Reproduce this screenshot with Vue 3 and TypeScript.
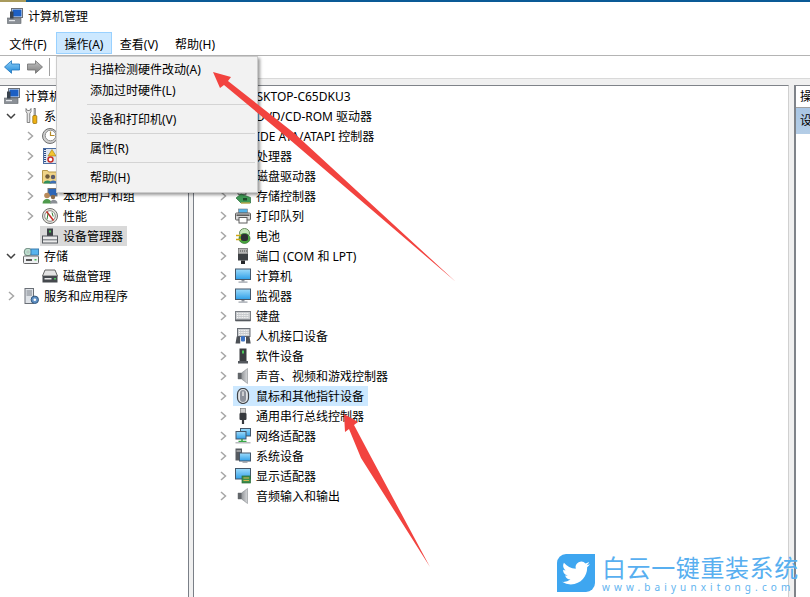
<script setup lang="ts">
interface TreeRow {
  label: string
  icon: string
  chevron?: 'right' | 'down'
  depth: number
  selected?: boolean
}

const menus = ['文件(F)', '操作(A)', '查看(V)', '帮助(H)']

// null is a separator line
const actionItems: (string | null)[] = [
  '扫描检测硬件改动(A)',
  '添加过时硬件(L)',
  null,
  '设备和打印机(V)',
  null,
  '属性(R)',
  null,
  '帮助(H)',
]

const leftTree: TreeRow[] = [
  { label: '计算机管理(本地)', icon: 'pc', depth: 0 },
  { label: '系统工具', icon: 'tools', chevron: 'down', depth: 1 },
  { label: '任务计划程序', icon: 'clock', chevron: 'right', depth: 2 },
  { label: '事件查看器', icon: 'log', chevron: 'right', depth: 2 },
  { label: '共享文件夹', icon: 'share', chevron: 'right', depth: 2 },
  { label: '本地用户和组', icon: 'users', chevron: 'right', depth: 2 },
  { label: '性能', icon: 'perf', chevron: 'right', depth: 2 },
  { label: '设备管理器', icon: 'devmgr', depth: 2, selected: true },
  { label: '存储', icon: 'storage', chevron: 'down', depth: 1 },
  { label: '磁盘管理', icon: 'disk', depth: 2 },
  { label: '服务和应用程序', icon: 'services', chevron: 'right', depth: 1 },
]

const deviceTree: TreeRow[] = [
  { label: 'DESKTOP-C65DKU3', icon: 'pc', depth: 0 },
  { label: 'DVD/CD-ROM 驱动器', icon: 'disk', chevron: 'right', depth: 1 },
  { label: 'IDE ATA/ATAPI 控制器', icon: 'storctl', chevron: 'right', depth: 1 },
  { label: '处理器', icon: 'storctl', chevron: 'right', depth: 1 },
  { label: '磁盘驱动器', icon: 'disk', chevron: 'right', depth: 1 },
  { label: '存储控制器', icon: 'storctl', chevron: 'right', depth: 1 },
  { label: '打印队列', icon: 'printer', chevron: 'right', depth: 1 },
  { label: '电池', icon: 'battery', chevron: 'right', depth: 1 },
  { label: '端口 (COM 和 LPT)', icon: 'port', chevron: 'right', depth: 1 },
  { label: '计算机', icon: 'monitor', chevron: 'right', depth: 1 },
  { label: '监视器', icon: 'monitor', chevron: 'right', depth: 1 },
  { label: '键盘', icon: 'keyboard', chevron: 'right', depth: 1 },
  { label: '人机接口设备', icon: 'hid', chevron: 'right', depth: 1 },
  { label: '软件设备', icon: 'software', chevron: 'right', depth: 1 },
  { label: '声音、视频和游戏控制器', icon: 'sound', chevron: 'right', depth: 1 },
  { label: '鼠标和其他指针设备', icon: 'mouse', chevron: 'right', depth: 1, selected: true },
  { label: '通用串行总线控制器', icon: 'usb', chevron: 'right', depth: 1 },
  { label: '网络适配器', icon: 'network', chevron: 'right', depth: 1 },
  { label: '系统设备', icon: 'system', chevron: 'right', depth: 1 },
  { label: '显示适配器', icon: 'display', chevron: 'right', depth: 1 },
  { label: '音频输入和输出', icon: 'sound', chevron: 'right', depth: 1 },
]
</script>

<template>
  <div class="window">
    <svg class="defs" width="0" height="0">
      <defs>
        <linearGradient id="screen" x1="0" y1="0" x2="0" y2="1">
          <stop offset="0" stop-color="#9fdcfb" />
          <stop offset="1" stop-color="#2f9fe8" />
        </linearGradient>
        <linearGradient id="backfill" x1="0" y1="0" x2="0" y2="1">
          <stop offset="0" stop-color="#8fd0f8" />
          <stop offset="1" stop-color="#1e88d8" />
        </linearGradient>
        <linearGradient id="fwdfill" x1="0" y1="0" x2="0" y2="1">
          <stop offset="0" stop-color="#c4c4c4" />
          <stop offset="1" stop-color="#7d7d7d" />
        </linearGradient>
        <linearGradient id="speaker" x1="0" y1="0" x2="1" y2="0">
          <stop offset="0" stop-color="#6e7276" />
          <stop offset="1" stop-color="#d6d8da" />
        </linearGradient>
      </defs>
      <symbol id="i-pc" viewBox="0 0 16 16">
        <rect x="0.500" y="10" width="13.500" height="5.500" fill="#8a8f96" stroke="#5f646a" stroke-width=".6" />
        <rect x="2" y="12" width="6" height="1.200" fill="#e4e7ea" />
        <rect x="4.500" y="0.500" width="11" height="9" fill="#e8ecef" stroke="#6b7078" />
        <rect x="5.500" y="1.500" width="9" height="7" fill="#1c5fc4" />
        <rect x="3" y="3.500" width="3.500" height="7" fill="#39434f" />
      </symbol>
      <symbol id="i-tools" viewBox="0 0 16 16">
        <path d="M3 .500v3l1.200 2v9h2.600v-9l1.200-2v-3L6.500 2.500h-2z" fill="#e6e6e6" stroke="#666" stroke-width=".8" />
        <rect x="11" y="0.500" width="1.600" height="7" fill="#b8b8b8" stroke="#666" stroke-width=".5" />
        <rect x="9.800" y="7.500" width="4" height="8" rx="1" fill="#eeb012" stroke="#8d6500" stroke-width=".7" />
      </symbol>
      <symbol id="i-clock" viewBox="0 0 16 16">
        <circle cx="8" cy="8" r="7.500" fill="#cfcfcf" stroke="#707070" />
        <circle cx="8.500" cy="7.500" r="5.300" fill="#fff" stroke="#8c8c8c" />
        <path d="M8.500 3.500v4H12.500" fill="none" stroke="#b58a2a" stroke-width="1.200" />
      </symbol>
      <symbol id="i-log" viewBox="0 0 16 16">
        <rect x="1.500" y="0.500" width="13" height="15" fill="#dfe7f2" stroke="#4d6ea3" />
        <path d="M3 1v14" stroke="#2f4f86" stroke-width="2" stroke-dasharray="1 1" />
        <path d="M10 1.500l4 6.500H6z" fill="#f4c430" stroke="#9a7a10" stroke-width=".6" />
        <circle cx="8.500" cy="11.500" r="2.500" fill="#fff" stroke="#c8302a" stroke-width="1.500" />
      </symbol>
      <symbol id="i-share" viewBox="0 0 16 16">
        <path d="M.500 2.500h5l1 1.500h9v11H.500z" fill="#f0d488" stroke="#b6984a" />
        <circle cx="5.500" cy="8.500" r="2.200" fill="#6d5a3a" />
        <path d="M1.500 15.500c0-4 8-4 8 0z" fill="#2e8f5d" />
        <circle cx="11" cy="9" r="2.200" fill="#5a5a6a" />
        <path d="M7.500 15.500c0-4 7.500-4 7.500 0z" fill="#3d6fb4" />
      </symbol>
      <symbol id="i-users" viewBox="0 0 16 16">
        <rect x="6" y="0.500" width="9" height="7.500" fill="#2c66b8" stroke="#777" />
        <circle cx="5" cy="7.500" r="2.800" fill="#b98a5a" />
        <path d="M.500 15.500c0-6 9-6 9 0z" fill="#4f9a4c" />
        <circle cx="11" cy="9" r="2.200" fill="#8a6a48" />
        <path d="M8 15.500c0-5 7.500-5 7.500 0z" fill="#8b8f96" />
      </symbol>
      <symbol id="i-perf" viewBox="0 0 16 16">
        <circle cx="8" cy="8" r="7.500" fill="#e8e6dc" stroke="#707070" />
        <circle cx="8" cy="8" r="5.300" fill="#fff" stroke="#8c8c8c" />
        <path d="M4.500 3.500l7 9" stroke="#c8302a" stroke-width="1.600" />
        <path d="M5 11.500l1-6M10 4.500l1.200 4" stroke="#2f7d32" />
      </symbol>
      <symbol id="i-devmgr" viewBox="0 0 16 16">
        <rect x="5" y="0.500" width="6" height="8" fill="#3d4146" />
        <rect x="7" y="2.500" width="2" height="2" fill="#4cc45a" />
        <rect x="0.500" y="8" width="15" height="7" fill="#eaeaea" stroke="#55595e" />
        <rect x="1" y="11" width="14" height="1.500" fill="#8f9398" />
      </symbol>
      <symbol id="i-storage" viewBox="0 0 16 16">
        <circle cx="5" cy="4" r="3.800" fill="#bfe0d0" stroke="#6e8a80" />
        <circle cx="5" cy="4" r="1" fill="#fff" stroke="#6e8a80" stroke-width=".5" />
        <rect x="8" y="1" width="7.500" height="6" fill="#58b4ee" stroke="#3d7fb0" />
        <rect x="0.500" y="8" width="15" height="7.500" rx="1" fill="#eef0f2" stroke="#666" />
        <rect x="3" y="11" width="6" height="2" fill="#555" />
        <rect x="11.500" y="11" width="2" height="1.500" fill="#4cc45a" />
      </symbol>
      <symbol id="i-disk" viewBox="0 0 16 16">
        <path d="M3 2h10l2.500 6H.500z" fill="#e3e3e3" stroke="#666" />
        <rect x="0.500" y="8" width="15" height="6.500" fill="#45494e" />
        <rect x="2.500" y="10" width="7" height="1.500" fill="#e8e8e8" />
        <rect x="12" y="10" width="2" height="1.500" fill="#4cc45a" />
      </symbol>
      <symbol id="i-services" viewBox="0 0 16 16">
        <rect x="2" y="0.500" width="8.500" height="15" fill="#dfe3e8" stroke="#6a6f76" />
        <path d="M3.500 3h5.500M3.500 5h5.500M3.500 7h5.500" stroke="#7a8088" />
        <circle cx="11.800" cy="11.800" r="3.700" fill="#5f90c4" stroke="#33597f" />
        <circle cx="11.800" cy="11.800" r="1.300" fill="#fff" />
      </symbol>
      <symbol id="i-storctl" viewBox="0 0 16 16">
        <rect x="2" y="0.500" width="8" height="6" fill="#e6e6e6" stroke="#5f5f5f" stroke-width=".8" transform="skewX(10)" />
        <path d="M1 10l5-4 9.500 3.500v5.500H6z" fill="#3f9a55" stroke="#2a6b3a" stroke-width=".7" />
        <rect x="8" y="10" width="4" height="2.500" fill="#1f4a2b" />
        <path d="M6 15h9" stroke="#d6b450" stroke-width="1.200" />
      </symbol>
      <symbol id="i-printer" viewBox="0 0 16 16">
        <rect x="3.500" y="1" width="9" height="4" fill="#53b3ea" stroke="#777" stroke-width=".6" />
        <rect x="0.500" y="5" width="15" height="7" rx="1" fill="#d8d8d8" stroke="#5f5f5f" />
        <rect x="1.500" y="6.500" width="13" height="1.300" fill="#3c3c3c" />
        <rect x="4" y="9.500" width="8" height="5.500" fill="#fff" stroke="#5f5f5f" />
      </symbol>
      <symbol id="i-battery" viewBox="0 0 16 16">
        <ellipse cx="9.500" cy="5" rx="5" ry="4.500" fill="#c4e6b8" stroke="#6d8f64" />
        <ellipse cx="9.500" cy="10.500" rx="5.500" ry="5" fill="#48a63e" stroke="#2c6e28" stroke-width=".7" />
        <rect x="6" y="6" width="7" height="7" rx="2.500" fill="#2d2f33" />
        <path d="M1 7.500h5M1 11.500h5" stroke="#d0a814" stroke-width="1.500" />
      </symbol>
      <symbol id="i-port" viewBox="0 0 16 16">
        <rect x="3.500" y="0.500" width="9" height="5.500" fill="#b5b5b5" stroke="#666" stroke-width=".7" />
        <path d="M5 3h.8M7 3h.8M9 3h.8M11 3h.8" stroke="#333" />
        <rect x="3" y="6" width="10" height="6.500" fill="#3d4044" />
        <rect x="6" y="12.500" width="4" height="3.500" fill="#26282b" />
      </symbol>
      <symbol id="i-monitor" viewBox="0 0 16 16">
        <rect x="0.500" y="1" width="15" height="10.500" fill="url(#screen)" stroke="#44576a" />
        <rect x="6.500" y="12" width="3" height="1.500" fill="#8a9098" />
        <rect x="3.500" y="13.500" width="9" height="1.200" fill="#9aa0a8" />
      </symbol>
      <symbol id="i-keyboard" viewBox="0 0 16 16">
        <rect x="0.500" y="3.500" width="15" height="9" fill="#c8cbce" stroke="#7b7f85" />
        <path d="M2 5.500h12M2 7.500h12M2 9.500h12" stroke="#f6f6f6" stroke-width="1.200" stroke-dasharray="1 .7" />
        <rect x="0.500" y="11.500" width="15" height="1.800" fill="#55595e" />
      </symbol>
      <symbol id="i-hid" viewBox="0 0 16 16">
        <rect x="2.500" y="0.500" width="12.500" height="8" fill="#c8cbce" stroke="#6a6f76" />
        <path d="M4 2.500h10M4 4.500h10M4 6.500h10" stroke="#f6f6f6" stroke-width="1.200" stroke-dasharray="1 .7" />
        <path d="M.500 15.500l1.200-7h3.500v7zM11 15.500v-7h3.500l1.200 7z" fill="#4c5056" />
        <rect x="6" y="8" width="4" height="5.500" rx="1" fill="#3d73c4" />
      </symbol>
      <symbol id="i-software" viewBox="0 0 16 16">
        <rect x="4.500" y="0.500" width="7" height="12.500" fill="#3a3d41" />
        <rect x="7" y="2.500" width="2" height="3" fill="#4cc45a" />
        <rect x="3" y="13" width="10" height="2.500" fill="#55595e" />
      </symbol>
      <symbol id="i-sound" viewBox="0 0 16 16">
        <path d="M3 5h3.500L12.500 .500v15L6.500 11H3z" fill="url(#speaker)" stroke="#8a8e92" stroke-width=".6" />
        <path d="M3 5h3.500v6H3z" fill="#62666a" />
      </symbol>
      <symbol id="i-mouse" viewBox="0 0 16 16">
        <rect x="2.500" y="0.500" width="11" height="15" rx="5.500" fill="#e2e5e8" stroke="#3f4348" stroke-width="1.200" />
        <rect x="5" y="2" width="6" height="12" rx="3" fill="#8d919b" />
        <rect x="7.300" y="3.500" width="1.400" height="4.500" fill="#e8e8e8" />
      </symbol>
      <symbol id="i-usb" viewBox="0 0 16 16">
        <rect x="5.500" y="0.500" width="5" height="4.500" fill="#d0d0d0" stroke="#777" stroke-width=".7" />
        <rect x="4.500" y="5" width="7" height="7" rx="1" fill="#36393d" />
        <path d="M8 12v4" stroke="#36393d" stroke-width="2.200" />
      </symbol>
      <symbol id="i-network" viewBox="0 0 16 16">
        <rect x="5.500" y="0.500" width="10" height="7.500" fill="url(#screen)" stroke="#44576a" />
        <rect x="1" y="3.500" width="10" height="7.500" fill="url(#screen)" stroke="#44576a" />
        <path d="M7 11v2.500M3.500 13.500h8" stroke="#39a845" stroke-width="1.600" />
        <rect x="0.500" y="14" width="15" height="1.500" fill="#b9bcc0" />
      </symbol>
      <symbol id="i-system" viewBox="0 0 16 16">
        <rect x="0.500" y="0.500" width="6.500" height="12" fill="#565a60" />
        <rect x="1.500" y="2.500" width="4.500" height="1" fill="#d8d8d8" />
        <rect x="4.500" y="5" width="11" height="8" fill="url(#screen)" stroke="#44576a" />
        <rect x="7.500" y="13" width="5" height="1.800" fill="#9aa0a8" />
      </symbol>
      <symbol id="i-display" viewBox="0 0 16 16">
        <rect x="0.500" y="0.500" width="15" height="10.500" fill="url(#screen)" stroke="#44576a" />
        <rect x="7" y="8" width="8.500" height="7" fill="#3d8f4a" stroke="#2a6b3a" stroke-width=".7" />
        <path d="M8.500 10h5.500M8.500 12.500h5.500" stroke="#d6b450" />
      </symbol>
    </svg>

    <div class="accent"><span class="accent-tan"></span></div>

    <header class="titlebar">
      <svg class="icon title-icon"><use href="#i-pc" /></svg>
      <span>计算机管理</span>
    </header>

    <nav class="menubar">
      <div v-for="(m, i) in menus" :key="m" class="menu-item" :class="{ open: i === 1 }">{{ m }}</div>
    </nav>

    <div class="toolbar">
      <svg class="tool" viewBox="0 0 16 14">
        <path d="M0.500 7L7.500 0.700V4H15.500V10H7.500V13.300Z" fill="url(#backfill)" stroke="#1c74bd" stroke-width=".8" />
      </svg>
      <svg class="tool" viewBox="0 0 16 14">
        <path d="M15.500 7L8.500 0.700V4H0.500V10H8.500V13.300Z" fill="url(#fwdfill)" stroke="#6f6f6f" stroke-width=".8" />
      </svg>
      <span class="tool-sep"></span>
    </div>

    <main class="panes">
      <section class="pane left">
        <div
          v-for="row in leftTree"
          :key="row.label"
          class="row"
          :class="'depth-' + row.depth"
        >
          <span class="chev">
            <svg v-if="row.chevron === 'right'" width="7" height="10" viewBox="0 0 7 10">
              <path d="M1 1l4.500 4L1 9" fill="none" stroke="#a6a6a6" stroke-width="1.500" />
            </svg>
            <svg v-else-if="row.chevron === 'down'" width="10" height="7" viewBox="0 0 10 7">
              <path d="M1 1l4 4 4-4" fill="none" stroke="#404040" stroke-width="1.500" />
            </svg>
          </span>
          <span class="node" :class="{ selected: row.selected }">
            <svg class="icon"><use :href="'#i-' + row.icon" /></svg>
            <span class="label">{{ row.label }}</span>
          </span>
        </div>
      </section>

      <div class="split-a"></div>

      <section class="pane center">
        <div
          v-for="row in deviceTree"
          :key="row.label"
          class="row"
          :class="'depth-' + row.depth"
        >
          <span class="chev">
            <svg v-if="row.chevron === 'right'" width="7" height="10" viewBox="0 0 7 10">
              <path d="M1 1l4.500 4L1 9" fill="none" stroke="#a6a6a6" stroke-width="1.500" />
            </svg>
          </span>
          <span class="node" :class="{ hot: row.selected }">
            <svg class="icon"><use :href="'#i-' + row.icon" /></svg>
            <span class="label">{{ row.label }}</span>
          </span>
        </div>
      </section>

      <div class="split-b"></div>

      <aside class="actions">
        <div class="actions-head">操作</div>
        <div class="actions-sel">设备管理器</div>
      </aside>
    </main>

    <div class="dropdown">
      <template v-for="(item, i) in actionItems" :key="i">
        <div v-if="item" class="drop-item">{{ item }}</div>
        <div v-else class="drop-sep"></div>
      </template>
    </div>

    <svg class="arrows" width="810" height="597" viewBox="0 0 810 597">
      <polygon points="213,72 231,77 228,81 294,133 456,282 289,139 224,85 220,88" fill="#f2433f" />
      <polygon points="344,414 358,422 354,425 371,457 430,567 361,458 349,429 345,432" fill="#f2433f" />
    </svg>

    <div class="brand">
      <div class="brand-tile">
        <svg width="28" height="28" viewBox="0 0 24 24">
          <path
            fill="#fff"
            d="M23.950 4.570a10 10 0 01-2.820.770 4.960 4.960 0 002.160-2.720c-.950.550-2 .950-3.120 1.180a4.920 4.920 0 00-8.380 4.480C7.690 8.090 4.070 6.130 1.640 3.160a4.820 4.820 0 00-.670 2.480c0 1.710.870 3.210 2.190 4.100a4.900 4.900 0 01-2.230-.620v.060a4.920 4.920 0 003.950 4.830 5 5 0 01-2.210.080 4.940 4.940 0 004.600 3.420A9.870 9.870 0 010 19.540a13.940 13.940 0 007.550 2.210c9.060 0 14-7.500 14-14 0-.210 0-.420-.020-.630a9.940 9.940 0 002.460-2.550z"
          />
        </svg>
      </div>
      <div class="brand-text">
        <div class="brand-name">白云一键重装系统</div>
        <div class="brand-url">www.baiyunxitong.com</div>
      </div>
    </div>
  </div>
</template>

<style scoped>
.window {
  position: relative;
  width: 810px;
  height: 597px;
  overflow: hidden;
  display: flex;
  flex-direction: column;
  background: #fff;
  color: #000;
  font-family: "Noto Sans", "Noto Sans CJK SC", sans-serif;
  font-size: 12px;
}
.defs {
  position: absolute;
}
.icon {
  width: 16px;
  height: 16px;
  flex: none;
}
.accent {
  height: 2px;
  flex: none;
  background: #0a5a96;
}
.accent-tan {
  display: block;
  width: 26px;
  height: 2px;
  background: #a89a5c;
}
.titlebar {
  height: 30px;
  flex: none;
  box-sizing: border-box;
  padding: 0 0 2px 7px;
  display: flex;
  align-items: center;
  gap: 5px;
}
.menubar {
  height: 23px;
  flex: none;
  display: flex;
  align-items: flex-start;
  border-bottom: 1px solid #b4b4b4;
}
.menu-item {
  width: 56px;
  height: 22px;
  box-sizing: border-box;
  line-height: 22px;
  padding-top: 1px;
  text-align: center;
  border: 1px solid transparent;
}
.menu-item:nth-child(3) {
  margin-left: -1px;
}
.menu-item.open {
  background: #cce8ff;
  border-color: #99d1ff;
}
.toolbar {
  height: 22px;
  flex: none;
  display: flex;
  align-items: center;
  padding-left: 4px;
  gap: 7px;
  border-bottom: 1px solid #d9d9d9;
}
.tool {
  width: 16px;
  height: 14px;
}
.tool-sep {
  width: 1px;
  height: 18px;
  margin-left: -1px;
  background: #a0a0a0;
}
.panes {
  flex: 1;
  display: flex;
  padding-top: 6px;
  background: #f0f0f0;
  min-height: 0;
}
.pane {
  background: #fff;
  border-top: 1px solid #7f8389;
}
.left {
  width: 189px;
  box-sizing: border-box;
  border-right: 1px solid #7a7f87;
}
.split-a {
  width: 4px;
  flex: none;
}
.center {
  width: 596px;
  box-sizing: border-box;
  border-left: 1px solid #7a7f87;
  border-right: 1px solid #d0d0d0;
  padding-left: 23px;
}
.split-b {
  width: 5px;
  flex: none;
}
.row {
  height: 20px;
  display: flex;
  align-items: center;
}
.chev {
  width: 12px;
  margin-right: 4px;
  flex: none;
  display: flex;
  align-items: center;
  justify-content: center;
}
.node {
  height: 20px;
  display: flex;
  align-items: center;
  gap: 5px;
  padding: 0 4px 0 2px;
}
.node.selected {
  background: #d9d9d9;
}
.node.hot {
  background: #cce8ff;
}
.label {
  white-space: nowrap;
}
.left .depth-0 {
  padding-left: 2px;
}
.left .depth-0 .chev {
  display: none;
}
.left .depth-1 {
  padding-left: 5px;
}
.left .depth-2 {
  padding-left: 24px;
}
.center .depth-0 {
  padding-left: 1px;
}
.center .depth-0 .chev {
  display: none;
}
.actions {
  flex: 1;
  min-width: 0;
  border-left: 2px solid #7f8389;
  border-top: 1px solid #7f8389;
  background: #fff;
  overflow: hidden;
  white-space: nowrap;
}
.actions-head {
  height: 21px;
  line-height: 22px;
  padding-left: 4px;
  border-bottom: 1px solid #a0a0a0;
}
.actions-sel {
  height: 26px;
  line-height: 26px;
  padding-left: 4px;
  background: linear-gradient(#a9c6e4, #b4cde6);
}
.dropdown {
  position: absolute;
  left: 56px;
  top: 56px;
  width: 202px;
  height: 137px;
  box-sizing: border-box;
  padding: 2px 2px 0 2px;
  background: #f2f2f2;
  border: 1px solid #cccccc;
  box-shadow: 2px 2px 3px rgba(0, 0, 0, 0.4);
}
.drop-item {
  height: 21px;
  line-height: 21px;
  padding-left: 31px;
}
.drop-sep {
  height: 1px;
  margin: 3px 0 4px 28px;
  background: #d4d4d4;
}
.arrows {
  position: absolute;
  left: 0;
  top: 0;
}
.brand {
  position: absolute;
  left: 557px;
  top: 554px;
  display: flex;
  gap: 7px;
}
.brand-tile {
  width: 38px;
  height: 38px;
  display: flex;
  align-items: center;
  justify-content: center;
  background: #3ea6f0;
  border-radius: 9px 0 9px 0;
}
.brand-name {
  font-size: 24px;
  line-height: 28px;
  letter-spacing: 0.6px;
  color: #58aff0;
  white-space: nowrap;
}
.brand-url {
  font-size: 10px;
  line-height: 10px;
  letter-spacing: 4.100px;
  color: #62b4ef;
  white-space: nowrap;
}
</style>
